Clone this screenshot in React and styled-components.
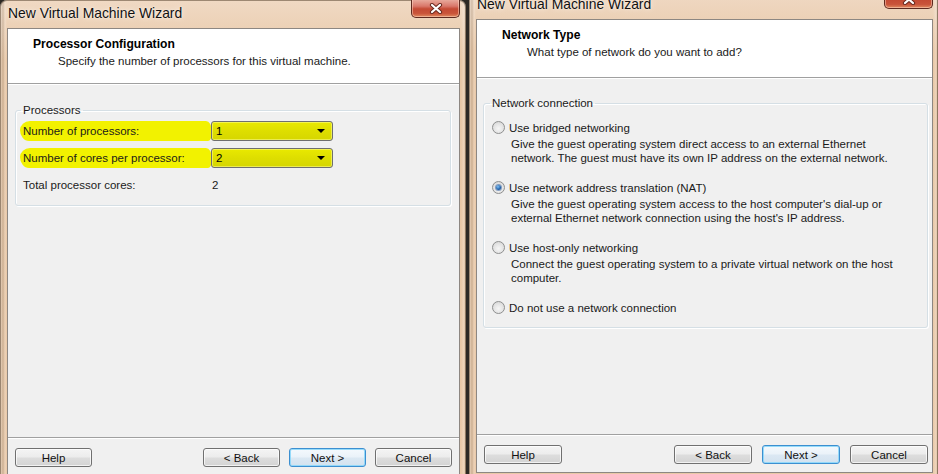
import React from 'react';
import styled, { createGlobalStyle } from 'styled-components';

const Global = createGlobalStyle`
  html, body { margin: 0; padding: 0; background: #2c2824; overflow: hidden; }
  body { font-family: "Liberation Sans", Arial, sans-serif; color: #1a1a1a; }
  * { box-sizing: border-box; }
`;

const Desktop = styled.div`
  display: flex;
  align-items: flex-start;
  gap: 3px;
  width: 938px;
  height: 474px;
  overflow: hidden;
`;

const Window = styled.div`
  flex: none;
  width: ${(p) => p.$w}px;
  height: 500px;
  margin-top: ${(p) => p.$shift || 0}px;
  padding: 0 ${(p) => p.$padR}px 0 7px;
  display: flex;
  flex-direction: column;
  border-radius: 7px 7px 0 0;
  background:
    linear-gradient(90deg, rgba(255,255,255,0.35) 0px, rgba(0,0,0,0.12) 3px, rgba(255,255,255,0.2) 5px, transparent 7px),
    linear-gradient(270deg, rgba(0,0,0,0.15) 0px, rgba(255,255,255,0.25) 2px, transparent 5px),
    linear-gradient(180deg, #f0d9c4 0px, #ecd1b6 28px, #e8c6a4 60px, #e9c8a7 100%);
  box-shadow: inset 0 0 0 1px rgba(90, 70, 50, 0.55);
`;

const TitleBar = styled.div`
  height: 28px;
  flex: none;
  display: flex;
  align-items: flex-start;
  justify-content: space-between;
  padding-left: 1px;
`;

const TitleText = styled.span`
  font-size: 13.9px;
  line-height: 16px;
  margin-top: 5px;
  color: #111;
  text-shadow: 0 0 6px rgba(255, 245, 235, 0.9), 0 0 2px rgba(255,255,255,0.8);
  white-space: nowrap;
`;

const CloseButton = styled.div`
  width: 49px;
  height: 19px;
  margin-top: -1px;
  display: flex;
  align-items: center;
  justify-content: center;
  border: 1px solid #5e2a20;
  border-top: none;
  border-radius: 0 0 5px 5px;
  background: linear-gradient(180deg, #eab0a2 0%, #d9776a 40%, #c44a34 55%, #c9543a 80%, #e08a60 100%);
  box-shadow: inset 0 0 0 1px rgba(255, 220, 200, 0.5);
`;

const Client = styled.div`
  height: ${(p) => p.$h}px;
  flex: none;
  display: flex;
  flex-direction: column;
  border: 1px solid #8d8782;
  background: #f0f0f0;
`;

const Header = styled.div`
  height: ${(p) => p.$h}px;
  flex: none;
  background: #ffffff;
  border-bottom: 1px solid #a0a0a0;
  padding: 8px 0 0 ${(p) => p.$indent}px;
`;

const HeaderTitle = styled.div`
  font-weight: bold;
  font-size: 12.1px;
  line-height: 15px;
  color: #000;
`;

const HeaderSub = styled.div`
  font-size: 11.5px;
  line-height: 15px;
  margin-top: 2px;
  padding-left: 25px;
  color: #1a1a1a;
`;

const Body = styled.div`
  flex: 1;
  padding: ${(p) => p.$top}px ${(p) => p.$right}px 0 ${(p) => p.$left}px;
  border-top: 1px solid #ffffff;
`;

const Group = styled.fieldset`
  margin: 0;
  border: 1px solid #d5dfe5;
  border-radius: 3px;
  padding: 0 7px ${(p) => p.$bottom}px ${(p) => p.$left}px;
  box-shadow: inset 1px 1px 0 #ffffff, 1px 1px 0 #ffffff;
`;

const Legend = styled.legend`
  font-size: 11.5px;
  line-height: 14px;
  padding: 0 2px;
  margin-left: -2px;
  color: #1a1a1a;
`;

const Rows = styled.div`
  display: flex;
  flex-direction: column;
  gap: 7px;
  margin-top: 4px;
`;

const Row = styled.div`
  display: grid;
  grid-template-columns: 188px 122px;
  align-items: center;
  height: 20px;
`;

const Label = styled.span`
  font-size: 11.5px;
  line-height: 20px;
  color: #1a1a1a;
  ${(p) =>
    p.$mark &&
    `
    height: 20px;
    margin-left: -3px;
    margin-right: -1px;
    padding-left: 3px;
    background: #f2f200;
    border-radius: 10px 6px 4px 9px / 9px 10px 8px 11px;
  `}
`;

const Value = styled.span`
  font-size: 11.5px;
  padding-left: 1px;
`;

const Combo = styled.div`
  height: 20px;
  display: flex;
  align-items: center;
  justify-content: space-between;
  padding: 0 7px 0 4px;
  border: 1px solid #6f6f6f;
  border-radius: 3px;
  background: linear-gradient(180deg, #e9e900 0%, #dede00 50%, #d6d600 100%);
  box-shadow: inset 0 0 0 1px rgba(255, 255, 160, 0.5);
  font-size: 11.5px;
  color: #000;
`;

const Arrow = styled.span`
  width: 0;
  height: 0;
  border-left: 4px solid transparent;
  border-right: 4px solid transparent;
  border-top: 4px solid #000;
`;

const Options = styled.div`
  display: flex;
  flex-direction: column;
  gap: 15px;
  margin-top: 10px;
`;

const Option = styled.div`
  display: flex;
  flex-direction: column;
`;

const RadioRow = styled.div`
  display: flex;
  align-items: center;
  gap: 4px;
  height: 15px;
  font-size: 11.5px;
  color: #1a1a1a;
`;

const Radio = styled.span`
  width: 13px;
  height: 13px;
  flex: none;
  border-radius: 50%;
  border: 1px solid #8e8f8f;
  background: radial-gradient(circle at 50% 60%, #f6f6f6 0%, #e3e3e3 55%, #d0d0d0 100%);
  display: flex;
  align-items: center;
  justify-content: center;
  &::after {
    content: '';
    display: ${(p) => (p.$on ? 'block' : 'none')};
    width: 5px;
    height: 5px;
    border-radius: 50%;
    background: radial-gradient(circle at 40% 35%, #7fc0f5 0%, #1e5fa8 60%, #0e3c7a 100%);
    box-shadow: 0 0 0 1px rgba(30, 80, 150, 0.5);
  }
`;

const Desc = styled.div`
  margin-top: 2px;
  padding-left: 19px;
  font-size: 11.5px;
  line-height: 14px;
  color: #1a1a1a;
`;

const Footer = styled.div`
  flex: none;
  display: flex;
  align-items: center;
  gap: ${(p) => p.$gap}px;
  padding: 10px ${(p) => p.$right}px ${(p) => p.$bottom}px 7px;
  border-top: 1px solid #a0a0a0;
  box-shadow: inset 0 1px 0 #ffffff;
`;

const Spacer = styled.div`
  flex: 1;
`;

const Button = styled.div`
  width: ${(p) => p.$w}px;
  height: 19px;
  flex: none;
  display: flex;
  align-items: center;
  justify-content: center;
  font-size: 11.5px;
  color: #111;
  border: 1px solid ${(p) => (p.$primary ? '#3c8fd0' : '#707070')};
  border-radius: 3px;
  background: ${(p) =>
    p.$primary
      ? 'linear-gradient(180deg, #f4f9fd 0%, #eaf2f9 48%, #dbe8f3 52%, #d3e2ef 100%)'
      : 'linear-gradient(180deg, #f4f4f4 0%, #ececec 48%, #dddddd 52%, #d3d3d3 100%)'};
  box-shadow: inset 0 0 0 1px ${(p) => (p.$primary ? 'rgba(140, 215, 250, 0.9)' : 'rgba(255,255,255,0.7)')};
`;

const CloseGlyph = () => (
  <svg width="14" height="11" viewBox="0 0 14 11">
    <path d="M3 2 L11 9 M11 2 L3 9" stroke="#6a2a20" strokeWidth="4.2" strokeLinecap="round" />
    <path d="M3 2 L11 9 M11 2 L3 9" stroke="#ffffff" strokeWidth="2.2" strokeLinecap="round" />
  </svg>
);

const Buttons = ({ w }) => (
  <>
    <Button $w={w}>Help</Button>
    <Spacer />
    <Button $w={w}>&lt; Back</Button>
    <Button $w={w} $primary>Next &gt;</Button>
    <Button $w={w}>Cancel</Button>
  </>
);

const options = [
  {
    label: 'Use bridged networking',
    desc: ['Give the guest operating system direct access to an external Ethernet', 'network. The guest must have its own IP address on the external network.'],
  },
  {
    label: 'Use network address translation (NAT)',
    on: true,
    desc: ["Give the guest operating system access to the host computer's dial-up or", "external Ethernet network connection using the host's IP address."],
  },
  {
    label: 'Use host-only networking',
    desc: ['Connect the guest operating system to a private virtual network on the host', 'computer.'],
  },
  { label: 'Do not use a network connection', desc: [] },
];

export default function App() {
  return (
    <>
      <Global />
      <Desktop>
        <Window $w={466} $padR={6}>
          <TitleBar>
            <TitleText>New Virtual Machine Wizard</TitleText>
            <CloseButton>
              <CloseGlyph />
            </CloseButton>
          </TitleBar>
          <Client $h={447}>
            <Header $h={55} $indent={25}>
              <HeaderTitle>Processor Configuration</HeaderTitle>
              <HeaderSub>Specify the number of processors for this virtual machine.</HeaderSub>
            </Header>
            <Body $top={18} $left={7} $right={8}>
              <Group $left={7} $bottom={10}>
                <Legend>Processors</Legend>
                <Rows>
                  <Row>
                    <Label $mark>Number of processors:</Label>
                    <Combo>
                      <span>1</span>
                      <Arrow />
                    </Combo>
                  </Row>
                  <Row>
                    <Label $mark>Number of cores per processor:</Label>
                    <Combo>
                      <span>2</span>
                      <Arrow />
                    </Combo>
                  </Row>
                  <Row>
                    <Label>Total processor cores:</Label>
                    <Value>2</Value>
                  </Row>
                </Rows>
              </Group>
            </Body>
            <Footer $gap={9} $right={7} $bottom={7}>
              <Buttons w={77} />
            </Footer>
          </Client>
        </Window>
        <Window $w={469} $padR={5} $shift={-9}>
          <TitleBar>
            <TitleText>New Virtual Machine Wizard</TitleText>
            <CloseButton>
              <CloseGlyph />
            </CloseButton>
          </TitleBar>
          <Client $h={454}>
            <Header $h={58} $indent={25}>
              <HeaderTitle>Network Type</HeaderTitle>
              <HeaderSub>What type of network do you want to add?</HeaderSub>
            </Header>
            <Body $top={17} $left={6} $right={4}>
              <Group $left={8} $bottom={12}>
                <Legend>Network connection</Legend>
                <Options>
                  {options.map((o) => (
                    <Option key={o.label}>
                      <RadioRow>
                        <Radio $on={o.on} />
                        <span>{o.label}</span>
                      </RadioRow>
                      {o.desc.length > 0 && (
                        <Desc>
                          {o.desc.map((d) => (
                            <div key={d}>{d}</div>
                          ))}
                        </Desc>
                      )}
                    </Option>
                  ))}
                </Options>
              </Group>
            </Body>
            <Footer $gap={10} $right={4} $bottom={8}>
              <Buttons w={78} />
            </Footer>
          </Client>
        </Window>
      </Desktop>
    </>
  );
}
